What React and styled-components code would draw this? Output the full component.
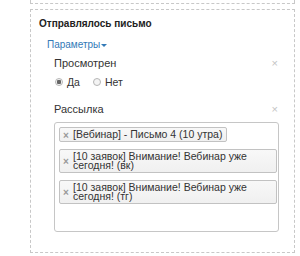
import React from "react";
import styled, { createGlobalStyle } from "styled-components";

const GlobalStyle = createGlobalStyle`
  body {
    margin: 0;
    background: #fff;
    font-family: "Liberation Sans", Arial, sans-serif;
    font-size: 10.5px;
    color: #333;
  }
`;

const tags = [
  "[Вебинар] - Письмо 4 (10 утра)",
  "[10 заявок] Внимание! Вебинар уже сегодня! (вк)",
  "[10 заявок] Внимание! Вебинар уже сегодня! (тг)",
];

const Page = styled.div`
  padding-left: 30px;
  width: 265px;
`;

const PrevBox = styled.div`
  height: 3px;
  border: 1px dashed #c8c8c8;
  border-top: none;
`;

const Group = styled.div`
  margin-top: 5px;
  border: 1px dashed #c8c8c8;
  padding: 7px 8px 0 8px;
  box-sizing: border-box;
  height: 244px;
`;

const Title = styled.div`
  font-weight: 700;
  font-size: 10px;
  line-height: 14px;
  color: #222;
`;

const ParamsLink = styled.a`
  display: inline-block;
  margin: 7px 0 0 8px;
  font-size: 10px;
  line-height: 14px;
  color: #337ab7;
  cursor: pointer;
`;

const Caret = styled.span`
  display: inline-block;
  width: 0;
  height: 0;
  margin-left: 1px;
  vertical-align: middle;
  border-top: 3px solid #337ab7;
  border-left: 3px solid transparent;
  border-right: 3px solid transparent;
`;

const Field = styled.div`
  margin: ${(p) => p.$gap || 4}px 7px 0 15px;
`;

const FieldHead = styled.div`
  display: flex;
  justify-content: space-between;
  align-items: center;
  font-size: 11px;
  line-height: 14px;
`;

const Remove = styled.span`
  color: #c4c4c4;
  font-size: 11px;
  margin-right: 1px;
  cursor: pointer;
`;

const Radios = styled.div`
  display: flex;
  gap: 12px;
  margin-top: 5px;
  font-size: 10.5px;
  line-height: 14px;
`;

const RadioLabel = styled.label`
  display: flex;
  align-items: center;
`;

const Radio = styled.input`
  appearance: none;
  width: 8px;
  height: 8px;
  margin: 0 4px 0 1px;
  border: 1px solid #b5b5b5;
  border-radius: 50%;
  background: #f4f4f4;

  &:checked {
    background: radial-gradient(circle, #666 0 2px, #f4f4f4 2.5px);
  }
`;

const MultiSelect = styled.div`
  margin-top: 6px;
  height: 110px;
  box-sizing: border-box;
  border: 1px solid #c6c6c6;
  border-radius: 3px;
  padding: 4px 1px 0 4px;
  display: flex;
  flex-direction: column;
  align-items: flex-start;
  gap: 7px;
`;

const Choice = styled.div`
  position: relative;
  padding: 2px 4px 2px 13px;
  font-size: 10.5px;
  line-height: 9px;
  border: 1px solid #c2c2c2;
  border-radius: 2px;
  background: linear-gradient(#f8f8f8, #f0f0f0);
  color: #333;
`;

const ChoiceClose = styled.span`
  position: absolute;
  left: 3px;
  top: 50%;
  transform: translateY(-50%);
  color: #999;
  font-weight: 700;
  font-size: 10px;
`;

function App() {
  return (
    <>
      <GlobalStyle />
      <Page>
        <PrevBox />
        <Group>
          <Title>Отправлялось письмо</Title>
          <ParamsLink>
            Параметры
            <Caret />
          </ParamsLink>

          <Field>
            <FieldHead>
              <span>Просмотрен</span>
              <Remove>×</Remove>
            </FieldHead>
            <Radios>
              <RadioLabel>
                <Radio type="radio" name="seen" defaultChecked />
                Да
              </RadioLabel>
              <RadioLabel>
                <Radio type="radio" name="seen" />
                Нет
              </RadioLabel>
            </Radios>
          </Field>

          <Field $gap={13}>
            <FieldHead>
              <span>Рассылка</span>
              <Remove>×</Remove>
            </FieldHead>
            <MultiSelect>
              {tags.map((t) => (
                <Choice key={t}>
                  <ChoiceClose>×</ChoiceClose>
                  {t}
                </Choice>
              ))}
            </MultiSelect>
          </Field>
        </Group>
      </Page>
    </>
  );
}

export default App;
